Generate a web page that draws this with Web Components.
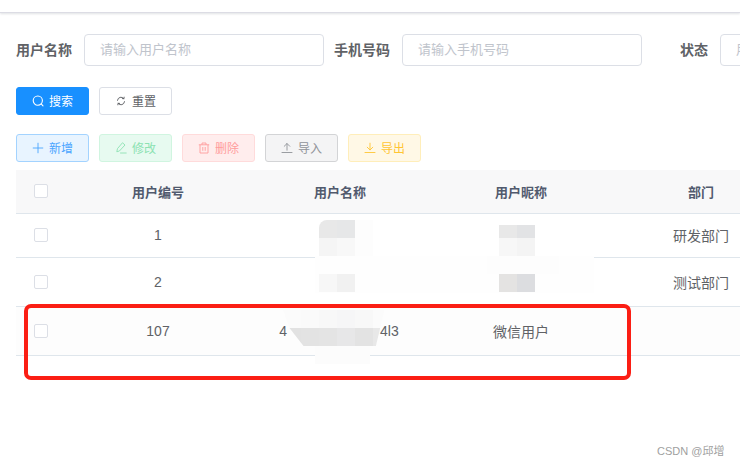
<!DOCTYPE html>
<html lang="zh">
<head>
<meta charset="utf-8">
<title>用户管理</title>
<style>
html,body{margin:0;padding:0;background:#fff;}
body{font-family:"Liberation Sans","Noto Sans CJK SC",sans-serif;color:#606266;}
</style>
</head>
<body>
<template id="t-field">
<style>
:host{display:flex;flex:none;height:32px;align-items:center;}
.l{width:68px;box-sizing:border-box;padding:0 12px 2px 0;text-align:right;font-size:14px;font-weight:700;color:#606266;white-space:nowrap;}
.i{width:240px;height:32px;box-sizing:border-box;border:1px solid #dcdfe6;border-radius:4px;padding:0 15px;font-size:13px;line-height:30px;color:#c0c4cc;white-space:nowrap;overflow:hidden;background:#fff;}
</style>
<div class="l"><slot name="label"></slot></div><div class="i"><slot name="ph"></slot></div>
</template>

<template id="t-btn">
<style>
:host{display:flex;flex:none;width:73px;height:28px;box-sizing:border-box;border:1px solid var(--b,#dcdfe6);background:var(--bg,#fff);color:var(--c,#606266);border-radius:3px;align-items:center;justify-content:center;gap:5px;font-size:12px;white-space:nowrap;}
:host([kind=primary]){--b:#1890ff;--bg:#1890ff;--c:#fff;}
:host([kind=add]){--b:#a3d3ff;--bg:#e8f4ff;--c:#4aa5ff;}
:host([kind=edit]){--b:#d0f5e0;--bg:#e7faf0;--c:#8ce2b2;}
:host([kind=del]){--b:#ffdbdb;--bg:#ffeded;--c:#ff9c9c;}
:host([kind=imp]){--b:#d3d4d6;--bg:#f4f4f5;--c:#909399;}
:host([kind=exp]){--b:#ffeeba;--bg:#fff8e6;--c:#ffc533;}
span{padding-bottom:1px;}
</style>
<slot name="icon"></slot><span><slot></slot></span>
</template>

<template id="t-row">
<style>
:host{display:grid;grid-template-columns:50px 184px 180px 182px 178px;width:774px;box-sizing:border-box;border-bottom:1px solid #dfe6ec;height:var(--h,44px);padding-bottom:var(--pb,0);background:#fff;font-size:14px;color:#606266;}
:host([head]){background:#f8f8f9;font-size:13px;font-weight:700;color:#515a6e;}
:host([tint]){background:#fdfdfd;}
</style>
<slot></slot>
</template>

<template id="t-cell">
<style>:host{display:flex;align-items:center;justify-content:center;white-space:nowrap;min-width:0;}</style>
<slot></slot>
</template>

<template id="t-check">
<style>:host{display:block;width:14px;height:14px;box-sizing:border-box;border:1px solid #dcdfe6;border-radius:2px;background:#fff;}</style>
</template>

<template id="t-frame">
<style>:host{position:absolute;left:24px;top:304px;width:607px;height:76px;box-sizing:border-box;border:4px solid #fb1e14;border-radius:7px;pointer-events:none;}</style>
</template>

<template id="t-mark">
<style>:host{position:absolute;left:657px;top:444px;font-size:11px;line-height:14px;color:#a0a0a0;white-space:nowrap;}</style>
<slot></slot>
</template>

<template id="t-bar">
<style>:host{display:block;height:12px;background:#fff;border-bottom:1px solid #dcdce4;box-shadow:0 1px 2px rgba(0,21,41,.12);}</style>
</template>

<template id="t-page">
<style>
:host{display:block;position:relative;width:740px;height:465px;overflow:hidden;background:#fff;}
.form{display:flex;gap:10px;margin:21px 0 0 16px;}
.btns{display:flex;gap:10px;margin-left:16px;}
.b1{margin-top:21px;}
.b2{margin-top:19px;}
.tbl{margin:8px 0 0 16px;}
</style>
<slot name="bar"></slot>
<div class="form"><slot name="form"></slot></div>
<div class="btns b1"><slot name="search"></slot></div>
<div class="btns b2"><slot name="tools"></slot></div>
<div class="tbl"><slot name="table"></slot></div>
<slot></slot>
</template>

<app-page>
  <top-bar slot="bar"></top-bar>

  <form-field slot="form"><span slot="label">用户名称</span><span slot="ph">请输入用户名称</span></form-field>
  <form-field slot="form"><span slot="label">手机号码</span><span slot="ph">请输入手机号码</span></form-field>
  <form-field slot="form"><span slot="label">状态</span><span slot="ph">用户状态</span></form-field>

  <ui-btn slot="search" kind="primary"><svg slot="icon" viewBox="0 0 12 12" width="12" height="12" fill="none" stroke="currentColor" stroke-width="1.1" stroke-linecap="round"><circle cx="5.8" cy="5.6" r="4.6"/><path d="M9.2 8.9 11 10.8"/></svg>搜索</ui-btn>
  <ui-btn slot="search"><svg slot="icon" viewBox="-1.5 -1.5 15 15" width="12" height="12" fill="none" stroke="currentColor" stroke-width="1.2" stroke-linecap="round" stroke-linejoin="round"><path d="M1.6 5.2A4.5 4.5 0 0 1 9.6 3M10.4 6.8A4.5 4.5 0 0 1 2.4 9"/><path d="M9.9 1.2 9.7 3.2 7.7 3M2.1 10.8 2.3 8.8 4.3 9"/></svg>重置</ui-btn>

  <ui-btn slot="tools" kind="add"><svg slot="icon" viewBox="0 0 12 12" width="12" height="12" fill="none" stroke="currentColor" stroke-width=".9"><path d="M6 .8v10.4M.8 6h10.4"/></svg>新增</ui-btn>
  <ui-btn slot="tools" kind="edit"><svg slot="icon" viewBox="0 0 12 12" width="12" height="12" fill="none" stroke="currentColor" stroke-width=".9" stroke-linejoin="round" stroke-linecap="round"><path d="M7.8 1 10 3 4.4 9 1.8 9.8 2.4 7Z"/><path d="M5.5 11h5.7"/></svg>修改</ui-btn>
  <ui-btn slot="tools" kind="del"><svg slot="icon" viewBox="0 0 12 12" width="12" height="12" fill="none" stroke="currentColor" stroke-width=".9" stroke-linejoin="round"><path d="M.8 2.8h10.4M4 2.8V1h4v1.8M2 2.8V11h8V2.8M4.8 5v3.8M7.2 5v3.8"/></svg>删除</ui-btn>
  <ui-btn slot="tools" kind="imp"><svg slot="icon" viewBox="0 0 12 12" width="12" height="12" fill="none" stroke="currentColor" stroke-width=".9" stroke-linecap="round" stroke-linejoin="round"><path d="M1 10.5h10M6 8.2V1.6M3.2 4.3 6 1.5l2.8 2.8"/></svg>导入</ui-btn>
  <ui-btn slot="tools" kind="exp"><svg slot="icon" viewBox="0 0 12 12" width="12" height="12" fill="none" stroke="currentColor" stroke-width=".9" stroke-linecap="round" stroke-linejoin="round"><path d="M1 10.5h10M6 1.2v6.6M3.2 5.2 6 8l2.8-2.8"/></svg>导出</ui-btn>

  <div slot="table">
    <t-row head style="--h:44px;--pb:1px"><t-cell><x-check></x-check></t-cell><t-cell>用户编号</t-cell><t-cell>用户名称</t-cell><t-cell>用户昵称</t-cell><t-cell>部门</t-cell></t-row>
    <t-row style="--h:44px;--pb:1px"><t-cell><x-check></x-check></t-cell><t-cell>1</t-cell><t-cell></t-cell><t-cell></t-cell><t-cell>研发部门</t-cell></t-row>
    <t-row style="--h:49px"><t-cell><x-check></x-check></t-cell><t-cell>2</t-cell><t-cell></t-cell><t-cell></t-cell><t-cell>测试部门</t-cell></t-row>
    <t-row tint style="--h:49px"><t-cell><x-check></x-check></t-cell><t-cell>107</t-cell><t-cell><span style="margin-right:2px">4<span style="display:inline-block;width:93px"></span>4l3</span></t-cell><t-cell>微信用户</t-cell><t-cell></t-cell></t-row>
  </div>

  <!-- white smears -->
  <mosaic-patch x="315" y="256" cell="279" h="37" colors="fefefe"></mosaic-patch>
  <mosaic-patch x="487" y="256" cell="72" h="18" colors="fdfdfd"></mosaic-patch>
  <mosaic-patch x="355" y="220" cell="18" h="36" colors="fdfdfd"></mosaic-patch>
  <mosaic-patch x="315" y="346" cell="55" h="18" colors="fcfcfc"></mosaic-patch>

  <!-- username mosaics -->
  <mosaic-patch x="319" y="220" cell="18" cols="2" colors="e8e8e8 e6e7e8 f5f5f5 f8f8f8" radius="8px 0 0 0"></mosaic-patch>
  <mosaic-patch x="319" y="274" cell="18" cols="2" colors="f7f7f7 f1f1f1"></mosaic-patch>
  <mosaic-patch x="283" y="310" cell="18" cols="6" colors="fbfbfb fafafa f8f8f8 f6f6f7 f8f8f8 fbfbfb e2e2e2 e3e3e3 e4e4e4 e7e7e8 e3e3e3 e8e8e8" clip="polygon(0 0,94% 0,90% 50%,86% 100%,19% 100%,6% 50%)"></mosaic-patch>

  <!-- nickname mosaics -->
  <mosaic-patch x="499" y="225" cell="18" cols="2" rows="13px 18px" colors="e8e8e8 e2e3e5 f7f7f7 f4f4f4"></mosaic-patch>
  <mosaic-patch x="499" y="274" cell="18" cols="2" colors="e4e3e2 dcdde0"></mosaic-patch>

  <mark-frame></mark-frame>
  <water-mark>CSDN @邱增</water-mark>
</app-page>

<script>
function reg(name, tid){
  customElements.define(name, class extends HTMLElement{
    constructor(){
      super();
      this.attachShadow({mode:'open'}).appendChild(document.getElementById(tid).content.cloneNode(true));
    }
  });
}
reg('app-page','t-page');
reg('top-bar','t-bar');
reg('form-field','t-field');
reg('ui-btn','t-btn');
reg('t-row','t-row');
reg('t-cell','t-cell');
reg('x-check','t-check');
reg('mark-frame','t-frame');
reg('water-mark','t-mark');

customElements.define('mosaic-patch', class extends HTMLElement{
  constructor(){
    super();
    this.attachShadow({mode:'open'});
  }
  connectedCallback(){
    const a = n => this.getAttribute(n);
    const cell = +a('cell');
    const cols = +(a('cols') || 1);
    const colors = a('colors').split(' ');
    const nrows = Math.ceil(colors.length / cols);
    const rows = a('rows') || (a('h') ? a('h') + 'px' : Array(nrows).fill('18px').join(' '));
    const blocks = colors.map(c => '<i style="background:#' + c + '"></i>').join('');
    this.shadowRoot.innerHTML =
      '<style>:host{position:absolute;left:' + a('x') + 'px;top:' + a('y') + 'px;display:grid;' +
      'grid-template-columns:repeat(' + cols + ',' + cell + 'px);grid-template-rows:' + rows + ';' +
      'border-radius:' + (a('radius') || '0') + ';overflow:hidden;' +
      (a('clip') ? 'clip-path:' + a('clip') + ';' : '') + '}i{display:block}</style>' + blocks;
  }
});
</script>
</body>
</html>
